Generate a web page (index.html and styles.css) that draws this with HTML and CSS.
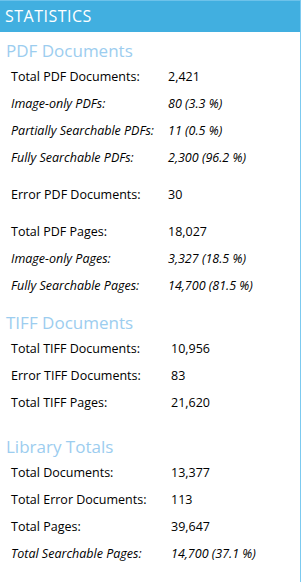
FILE: index.html
```html
<!DOCTYPE html>
<html lang="en">
<head>
  <meta charset="UTF-8" />
  <meta name="viewport" content="width=device-width, initial-scale=1.0"/>
  <title>Statistics</title>
  <link rel="stylesheet" href="styles.css">
</head>
<body>

  <!-- Statistics Panel -->
  <div class="panel">
    <div class="panel-title">STATISTICS</div>

    <!-- PDF -->
    <h2 class="section-title">PDF Documents</h2>
    <div class="stats stats-pdf">
      <div class="row"><span>Total PDF Documents:</span><span>2,421</span></div>
      <div class="row sub"><span>Image-only PDFs:</span><span>80 (3.3 %)</span></div>
      <div class="row sub"><span>Partially Searchable PDFs:</span><span>11 (0.5 %)</span></div>
      <div class="row sub"><span>Fully Searchable PDFs:</span><span>2,300 (96.2 %)</span></div>
      <div class="row gap"><span>Error PDF Documents:</span><span>30</span></div>
      <div class="row gap"><span>Total PDF Pages:</span><span>18,027</span></div>
      <div class="row sub"><span>Image-only Pages:</span><span>3,327 (18.5 %)</span></div>
      <div class="row sub"><span>Fully Searchable Pages:</span><span>14,700 (81.5 %)</span></div>
    </div>

    <!-- TIFF -->
    <h2 class="section-title tiff">TIFF Documents</h2>
    <div class="stats">
      <div class="row"><span>Total TIFF Documents:</span><span>10,956</span></div>
      <div class="row"><span>Error TIFF Documents:</span><span>83</span></div>
      <div class="row"><span>Total TIFF Pages:</span><span>21,620</span></div>
    </div>

    <!-- Library -->
    <h2 class="section-title library">Library Totals</h2>
    <div class="stats">
      <div class="row"><span>Total Documents:</span><span>13,377</span></div>
      <div class="row"><span>Total Error Documents:</span><span>113</span></div>
      <div class="row"><span>Total Pages:</span><span>39,647</span></div>
      <div class="row sub"><span>Total Searchable Pages:</span><span>14,700 (37.1 %)</span></div>
    </div>
  </div>

</body>
</html>
```

FILE: styles.css
```css
body {
  margin: 0;
  font-family: "Open Sans", "Noto Sans", sans-serif;
  background: #fff;
  color: #000;
}

.panel {
  width: 300px;
  height: 582px;
  border-right: 1px solid #7ccaf0;
}

.panel-title {
  height: 31px;
  line-height: 31px;
  padding-left: 5px;
  border-top: 1px solid #6dc2ea;
  background-color: #41afe0;
  color: #fff;
  font-size: 16px;
  letter-spacing: 0.5px;
}

.section-title {
  margin: 7px 0 0 6px;
  font-size: 17px;
  line-height: 24px;
  font-weight: normal;
  color: #9ccdef;
}

.section-title.tiff {
  margin-top: 12px;
}

.section-title.library {
  margin-top: 19px;
}

.stats {
  padding-left: 11px;
}

.row {
  display: grid;
  grid-template-columns: 160px 1fr;
  height: 27px;
  line-height: 27px;
  font-size: 12.5px;
}

.stats-pdf .row {
  grid-template-columns: 157px 1fr;
}

.row.sub {
  font-style: italic;
}

.row.gap {
  margin-top: 10px;
}
```
